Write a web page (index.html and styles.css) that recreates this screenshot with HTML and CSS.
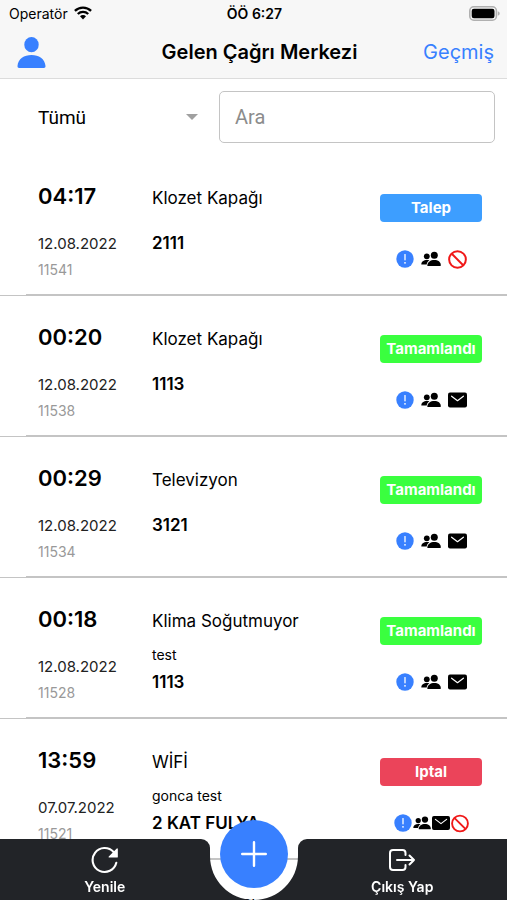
FILE: index.html
```html
<!DOCTYPE html>
<html lang="tr">
<head>
  <meta charset="UTF-8">
  <meta name="viewport" content="width=device-width, initial-scale=1.0">
  <title>Gelen Çağrı Merkezi</title>
  <link rel="stylesheet" href="styles.css">
</head>
<body>
  <!-- Shared icons -->
  <svg class="icon-defs" width="0" height="0" aria-hidden="true">
    <symbol id="icon-alert" viewBox="0 0 18 18">
      <circle cx="9" cy="9" r="8.7" fill="#3880ff"/>
      <path d="M9 4.6v5.2" stroke="#fff" stroke-width="1.3" stroke-linecap="round"/>
      <circle cx="9" cy="12.8" r="0.9" fill="#fff"/>
    </symbol>
    <symbol id="icon-people" viewBox="0 0 20 18">
      <circle cx="5.8" cy="6.3" r="2.9"/>
      <circle cx="13.3" cy="5.2" r="3.5"/>
      <path d="M0.3 14.6c0-3 2.4-4.6 5.5-4.6 1 0 1.9.1 2.6.5C6.6 11.5 5.8 13 5.7 14.6z"/>
      <path d="M6.8 16c-.3 0-.5-.2-.5-.6.3-3.5 3.2-5.4 7-5.4s6.5 1.9 6.5 5.3c0 .5-.2.7-.5.7z"/>
    </symbol>
    <symbol id="icon-mail" viewBox="0 0 19 18">
      <rect x="0" y="1.6" width="19" height="14.8" rx="2"/>
      <path d="M3.6 5.2L9.5 9.7l5.9-4.5" fill="none" stroke="#fff" stroke-width="1.2" stroke-linecap="round" stroke-linejoin="round"/>
    </symbol>
    <symbol id="icon-ban" viewBox="0 0 20 20">
      <g fill="none" stroke="#f01818" stroke-width="2.1">
        <circle cx="10" cy="10" r="8.8"/>
        <path d="M4 4l12 12"/>
      </g>
    </symbol>
  </svg>

  <div class="app">
    <header class="header">
      <div class="status-bar">
        <span class="carrier">Operatör
          <svg width="18" height="14" viewBox="0 0 18 14" fill="none" stroke="#000" stroke-width="2.3" aria-hidden="true">
            <path d="M0.9 4.9a11.6 11.6 0 0 1 16.2 0"/>
            <path d="M3.8 8a7.4 7.4 0 0 1 10.4 0"/>
            <path d="M9 13.4L6 10.3a4.2 4.2 0 0 1 6 0z" fill="#000" stroke="none"/>
          </svg>
        </span>
        <span class="clock">ÖÖ 6:27</span>
        <span class="battery">
          <svg width="31" height="15" viewBox="0 0 31 15" aria-hidden="true">
            <rect x="0.8" y="0.8" width="26.6" height="13.4" rx="4" fill="#f7f7f7" stroke="#b0b0b0" stroke-width="1.6"/>
            <rect x="2.7" y="2.7" width="22.8" height="9.6" rx="2.2"/>
            <path d="M28.8 5.2c1.4.5 1.9 1.3 1.9 2.3s-.5 1.8-1.9 2.3z" fill="#b0b0b0"/>
          </svg>
        </span>
      </div>
      <div class="toolbar">
        <button class="profile-btn" type="button" aria-label="Profil">
          <svg width="29" height="31" viewBox="0 0 29 31" fill="#3880ff" aria-hidden="true">
            <ellipse cx="14.5" cy="7.7" rx="7.2" ry="7.6"/>
            <path d="M2.2 31C1 31 .4 30.2.5 29 1.1 21.6 7.2 18 14.5 18s13.4 3.6 14 11c.1 1.200-.5 2-1.7 2z"/>
          </svg>
        </button>
        <h1 class="title">Gelen Çağrı Merkezi</h1>
        <a class="history-link" href="#">Geçmiş</a>
      </div>
    </header>

    <div class="filters">
      <div class="select-wrap">
        <select class="status-select" aria-label="Durum">
          <option>Tümü</option>
          <option>Talep</option>
          <option>Tamamlandı</option>
          <option>Iptal</option>
        </select>
      </div>
      <input class="search" type="text" placeholder="Ara" aria-label="Ara">
    </div>

    <main class="calls">
      <article class="call">
        <div class="when">
          <span class="time">04:17</span>
          <span class="date">12.08.2022</span>
          <span class="number">11541</span>
        </div>
        <div class="what">
          <span class="subject">Klozet Kapağı</span>
          <span class="note"></span>
          <span class="room">2111</span>
        </div>
        <div class="state">
          <span class="badge badge-request">Talep</span>
          <div class="icons">
            <svg class="alert"><use href="#icon-alert"/></svg>
            <svg class="people"><use href="#icon-people"/></svg>
            <svg class="ban"><use href="#icon-ban"/></svg>
          </div>
        </div>
      </article>

      <article class="call">
        <div class="when">
          <span class="time">00:20</span>
          <span class="date">12.08.2022</span>
          <span class="number">11538</span>
        </div>
        <div class="what">
          <span class="subject">Klozet Kapağı</span>
          <span class="note"></span>
          <span class="room">1113</span>
        </div>
        <div class="state">
          <span class="badge badge-done">Tamamlandı</span>
          <div class="icons">
            <svg class="alert"><use href="#icon-alert"/></svg>
            <svg class="people"><use href="#icon-people"/></svg>
            <svg class="mail"><use href="#icon-mail"/></svg>
          </div>
        </div>
      </article>

      <article class="call">
        <div class="when">
          <span class="time">00:29</span>
          <span class="date">12.08.2022</span>
          <span class="number">11534</span>
        </div>
        <div class="what">
          <span class="subject">Televizyon</span>
          <span class="note"></span>
          <span class="room">3121</span>
        </div>
        <div class="state">
          <span class="badge badge-done">Tamamlandı</span>
          <div class="icons">
            <svg class="alert"><use href="#icon-alert"/></svg>
            <svg class="people"><use href="#icon-people"/></svg>
            <svg class="mail"><use href="#icon-mail"/></svg>
          </div>
        </div>
      </article>

      <article class="call">
        <div class="when">
          <span class="time">00:18</span>
          <span class="date">12.08.2022</span>
          <span class="number">11528</span>
        </div>
        <div class="what">
          <span class="subject">Klima Soğutmuyor</span>
          <span class="note">test</span>
          <span class="room">1113</span>
        </div>
        <div class="state">
          <span class="badge badge-done">Tamamlandı</span>
          <div class="icons">
            <svg class="alert"><use href="#icon-alert"/></svg>
            <svg class="people"><use href="#icon-people"/></svg>
            <svg class="mail"><use href="#icon-mail"/></svg>
          </div>
        </div>
      </article>

      <article class="call">
        <div class="when">
          <span class="time">13:59</span>
          <span class="date">07.07.2022</span>
          <span class="number">11521</span>
        </div>
        <div class="what">
          <span class="subject">WİFİ</span>
          <span class="note">gonca test</span>
          <span class="room">2 KAT FULYA</span>
        </div>
        <div class="state">
          <span class="badge badge-cancel">Iptal</span>
          <div class="icons icons-tight">
            <svg class="alert"><use href="#icon-alert"/></svg>
            <svg class="people"><use href="#icon-people"/></svg>
            <svg class="mail"><use href="#icon-mail"/></svg>
            <svg class="ban"><use href="#icon-ban"/></svg>
          </div>
        </div>
      </article>

      <article class="call">
        <div class="when"></div>
        <div class="what">
          <span class="subject">Klima Arızası</span>
        </div>
      </article>
    </main>

    <!-- Bottom bar, sits over the list -->
    <nav class="tab-bar">
      <button class="tab tab-left" type="button">
        <svg width="28" height="28" viewBox="0 0 28 28" fill="none" stroke="#fff" stroke-width="2.1" stroke-linecap="round" aria-hidden="true">
          <path d="M25.3 16.8A12 12 0 1 1 22.6 6"/>
          <path d="M26.2 3v8h-8z" fill="#fff" stroke-width="1.2" stroke-linejoin="round"/>
        </svg>
        Yenile
      </button>
      <div class="notch">
        <svg class="notch-shape" viewBox="0 0 88 61" aria-hidden="true">
          <path d="M0 17C0 41.3 19.7 61 44 61S88 41.3 88 17V61H0z" fill="#222428"/>
        </svg>
        <button class="add-btn" type="button" aria-label="Ekle">
          <svg width="26" height="26" viewBox="0 0 26 26" stroke="#fff" stroke-width="2.4" stroke-linecap="round" aria-hidden="true">
            <path d="M13 1.2v23.6M1.2 13h23.6"/>
          </svg>
        </button>
      </div>
      <button class="tab tab-right" type="button">
        <svg width="28" height="28" viewBox="0 0 28 28" fill="none" stroke="#fff" stroke-width="2" stroke-linecap="round" stroke-linejoin="round" aria-hidden="true">
          <path d="M17.500 9V7a3 3 0 0 0-3-3H5a3 3 0 0 0-3 3v14a3 3 0 0 0 3 3h9.500a3 3 0 0 0 3-3v-2"/>
          <path d="M9 14h17M21.500 9.500L26 14l-4.500 4.500"/>
        </svg>
        Çıkış Yap
      </button>
    </nav>
  </div>
</body>
</html>
```
FILE: styles.css
```css
* {
  box-sizing: border-box;
}

body {
  margin: 0;
  font-family: Inter, "Liberation Sans", sans-serif;
  color: #000;
  background-color: #fff;
}

button {
  font-family: inherit;
  padding: 0;
  border: none;
  cursor: pointer;
}

svg {
  display: block;
}

.icon-defs {
  position: absolute;
}

.app {
  height: 100vh;
  display: flex;
  flex-direction: column;
  overflow: hidden;
}

/* Header */
.header {
  background-color: #f7f7f7;
  border-bottom: 1px solid #dcdcdc;
}

.status-bar {
  display: grid;
  grid-template-columns: 1fr auto 1fr;
  align-items: center;
  height: 26px;
  padding: 0 7px 0 9px;
  font-size: 14px;
}

.carrier {
  display: flex;
  align-items: center;
  gap: 6px;
}

.clock {
  font-weight: 600;
}

.battery {
  justify-self: end;
}

.toolbar {
  display: grid;
  grid-template-columns: 1fr auto 1fr;
  align-items: center;
  height: 52px;
  padding: 0 13px 0 17px;
}

.profile-btn {
  justify-self: start;
  background: none;
}

.title {
  margin: 0;
  padding-left: 8px;
  font-size: 20px;
  font-weight: 600;
}

.history-link {
  justify-self: end;
  font-size: 20px;
  color: #3880ff;
  text-decoration: none;
}

/* Filters */
.filters {
  display: grid;
  grid-template-columns: 160px 1fr;
  gap: 21px;
  align-items: center;
  height: 76px;
  padding: 0 12px 0 38px;
}

.select-wrap {
  display: flex;
  align-items: center;
}

.select-wrap::after {
  content: "";
  border: 6px solid transparent;
  border-top-color: #a0a0a0;
  border-bottom: none;
}

.status-select {
  flex: 1;
  appearance: none;
  padding: 0;
  border: none;
  background: none;
  font-family: Roboto, sans-serif;
  font-size: 19px;
  color: #000;
}

.search {
  width: 100%;
  height: 52px;
  padding: 0 15px;
  border: 1px solid #c4c4c4;
  border-radius: 5px;
  font-family: Roboto, sans-serif;
  font-size: 20px;
}

.search::placeholder {
  color: #8c8c8c;
}

/* Call list */
.calls {
  flex: 1;
  min-height: 0;
  overflow: hidden;
}

/* full width line, with a lighter one above it that starts at 26px */
.call {
  display: grid;
  grid-template-columns: 114px 1fr 102px;
  height: 141px;
  padding: 27px 25px 0 38px;
  border-bottom: 1px solid #c4c4c4;
  background: linear-gradient(#c4c4c4, #c4c4c4) 26px 100% / 100% 1px no-repeat;
}

.when,
.what,
.state {
  display: flex;
  flex-direction: column;
}

.time {
  margin-bottom: 21px;
  font-size: 22px;
  font-weight: 600;
  line-height: 28px;
}

.date {
  font-size: 15px;
  line-height: 26px;
  color: #222;
}

.number {
  font-size: 14px;
  line-height: 26px;
  color: #999;
}

.subject {
  margin-bottom: 4px;
  font-size: 17px;
  line-height: 32px;
}

.note {
  font-size: 14px;
  line-height: 28px;
}

.note:empty {
  height: 12px;
}

.room {
  font-size: 17px;
  font-weight: 600;
  line-height: 26px;
}

.state {
  gap: 27px;
  padding-top: 12px;
}

.badge {
  border-radius: 4px;
  font-size: 15px;
  font-weight: 700;
  line-height: 28px;
  text-align: center;
  color: #fff;
}

.badge-request {
  background-color: #3d9eff;
}

.badge-done {
  background-color: #3aff3f;
}

.badge-cancel {
  background-color: #eb445a;
}

.icons {
  display: flex;
  justify-content: center;
  align-items: center;
  gap: 7px;
  height: 20px;
}

.icons-tight {
  gap: 1px;
}

.alert {
  width: 18px;
  height: 18px;
}

.people {
  width: 20px;
  height: 18px;
}

.mail {
  width: 19px;
  height: 18px;
}

.ban {
  width: 19px;
  height: 19px;
}

.icons-tight .people,
.icons-tight .mail,
.icons-tight .ban {
  width: 18px;
}

/* Bottom bar */
.tab-bar {
  position: fixed;
  left: 0;
  right: 0;
  bottom: 0;
  display: grid;
  grid-template-columns: 1fr 88px 1fr;
  height: 61px;
}

.tab {
  display: flex;
  flex-direction: column;
  align-items: center;
  gap: 4px;
  padding-top: 7px;
  background-color: #222428;
  color: #fff;
  font-size: 14px;
  font-weight: 600;
  line-height: 18px;
}

.tab-left {
  border-top-right-radius: 9px;
}

.tab-right {
  border-top-left-radius: 9px;
}

.notch {
  position: relative;
}

.notch-shape {
  width: 100%;
  height: 61px;
}

.add-btn {
  position: absolute;
  top: -19px;
  left: 10px;
  display: flex;
  align-items: center;
  justify-content: center;
  width: 68px;
  height: 68px;
  border-radius: 50%;
  background-color: #3880ff;
}
```
